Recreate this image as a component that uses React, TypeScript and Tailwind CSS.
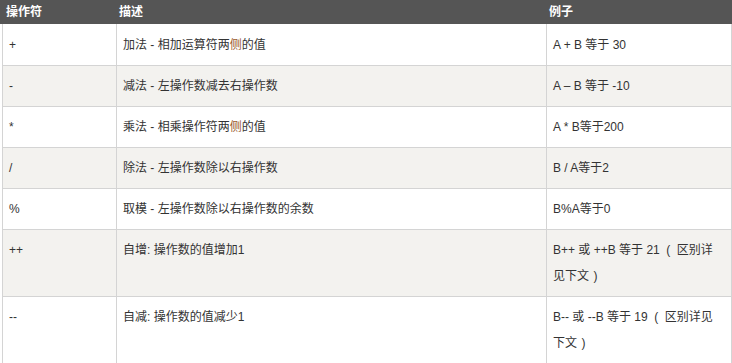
import React from "react";

const LP = () => <span className="inline-block w-[17px] text-center">(</span>;
const RP = () => <span className="inline-block w-[13px] text-center">)</span>;

const rows: { op: string; desc: React.ReactNode; ex: React.ReactNode }[] = [
  { op: "+", desc: <>加法 - 相加运算符两<span className="text-[#9a5a2a]">侧</span>的值</>, ex: "A + B 等于 30" },
  { op: "-", desc: "减法 - 左操作数减去右操作数", ex: "A – B 等于 -10" },
  { op: "*", desc: <>乘法 - 相乘操作符两<span className="text-[#9a5a2a]">侧</span>的值</>, ex: "A * B等于200" },
  { op: "/", desc: "除法 - 左操作数除以右操作数", ex: "B / A等于2" },
  { op: "%", desc: "取模 - 左操作数除以右操作数的余数", ex: "B%A等于0" },
  {
    op: "++",
    desc: "自增: 操作数的值增加1",
    ex: (
      <>
        B++ 或 ++B 等于 21<LP />区别详
        <br />
        见下文<RP />
      </>
    ),
  },
  {
    op: "--",
    desc: "自减: 操作数的值减少1",
    ex: (
      <>
        B-- 或 --B 等于 19<LP />区别详见
        <br />
        下文<RP />
      </>
    ),
  },
];

export default function App() {
  return (
    <div
      className="w-[732px] h-[363px] overflow-hidden bg-white text-[12px] text-[#333]"
      style={{ fontFamily: '"Liberation Sans", "Noto Sans CJK SC", sans-serif' }}
    >
      <div className="grid grid-cols-[115px_430px_187px] h-[24px] bg-[#555555] text-white font-bold leading-[24px]">
        <div className="pl-[6px]">操作符</div>
        <div className="pl-[4px]">描述</div>
        <div className="pl-[4px]">例子</div>
      </div>
      <div className="ml-[2px] w-[730px] border-l border-r border-[#d4d4d4]">
        {rows.map((r, i) => (
          <div
            key={i}
            className={`grid grid-cols-[113px_430px_185px] ${i > 0 ? "border-t border-[#d4d4d4]" : ""} ${
              i % 2 === 1 ? "bg-[#f3f2ef]" : "bg-white"
            }`}
          >
            <div className={`px-[6px] pb-[7px] leading-[26px] ${i > 0 ? "pt-[7px]" : "pt-[8px]"}`}>{r.op}</div>
            <div className={`px-[6px] pb-[7px] leading-[26px] border-l border-[#d4d4d4] ${i > 0 ? "pt-[7px]" : "pt-[8px]"}`}>{r.desc}</div>
            <div className={`pl-[6px] pr-[2px] pb-[7px] leading-[26px] whitespace-nowrap border-l border-[#d4d4d4] ${i > 0 ? "pt-[7px]" : "pt-[8px]"}`}>{r.ex}</div>
          </div>
        ))}
      </div>
    </div>
  );
}
